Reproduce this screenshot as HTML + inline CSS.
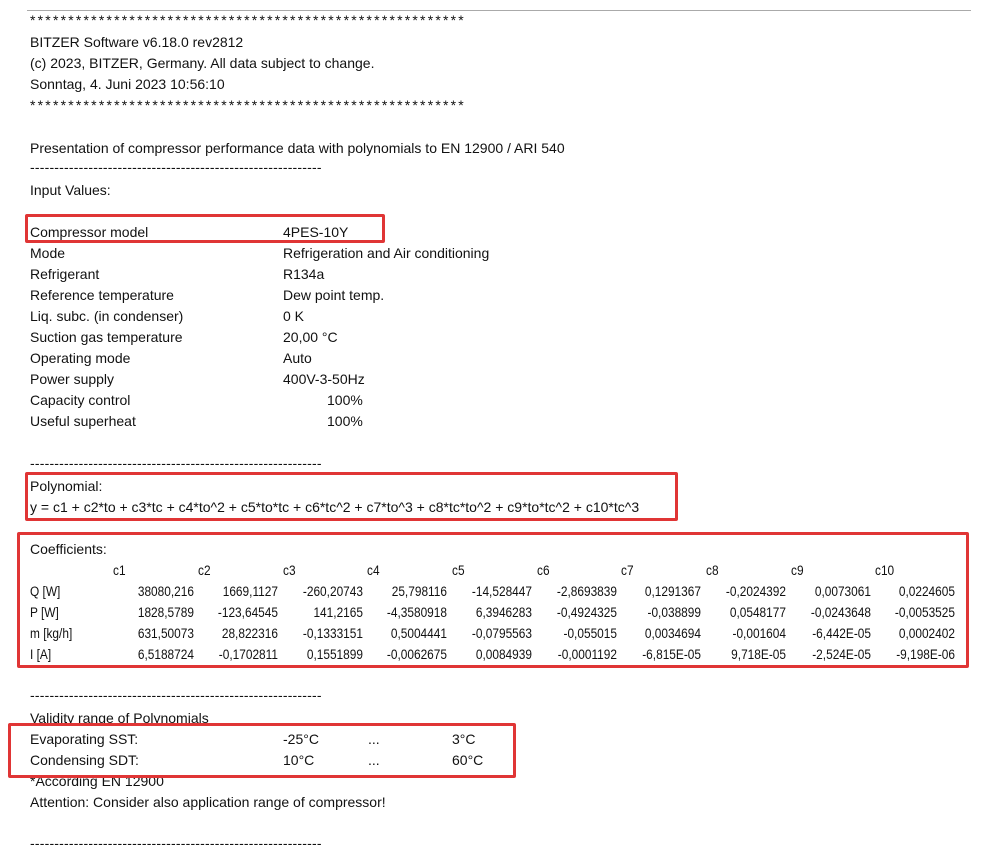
<!DOCTYPE html>
<html><head><meta charset="utf-8"><style>
body{margin:0;background:#fff;width:981px;height:867px;position:relative;overflow:hidden;font-family:"Liberation Sans",sans-serif;font-size:14px;color:#111}
.l{position:absolute;white-space:pre;line-height:16px}
.st{letter-spacing:2.2px}
.da{letter-spacing:0.2px}
.box{position:absolute;border:3px solid #e03535;border-radius:2px;box-sizing:border-box}
.r{position:absolute;left:30px;height:16px;line-height:16px;white-space:pre;font-size:13.5px}
.r span{position:absolute;top:0;transform:scaleX(0.88);transform-origin:right top;text-align:right;width:90px}
.r span.h{transform-origin:left top;text-align:left}
</style></head><body>
<div style="position:absolute;left:27px;top:10px;width:944px;height:1px;background:#aaa"></div>
<div class="l st" style="left:30px;top:12px">*********************************************************</div>
<div class="l" style="left:30px;top:34px">BITZER Software v6.18.0 rev2812</div>
<div class="l" style="left:30px;top:55px">(c) 2023, BITZER, Germany. All data subject to change.</div>
<div class="l" style="left:30px;top:76px">Sonntag, 4. Juni 2023 10:56:10</div>
<div class="l st" style="left:30px;top:97px">*********************************************************</div>
<div class="l" style="left:30px;top:140px">Presentation of compressor performance data with polynomials to EN 12900 / ARI 540</div>
<div class="l da" style="left:30px;top:159px">------------------------------------------------------------</div>
<div class="l" style="left:30px;top:182px">Input Values:</div>
<div class="l" style="left:30px;top:224px">Compressor model</div><div class="l" style="left:283px;top:224px">4PES-10Y</div>
<div class="l" style="left:30px;top:245px">Mode</div><div class="l" style="left:283px;top:245px">Refrigeration and Air conditioning</div>
<div class="l" style="left:30px;top:266px">Refrigerant</div><div class="l" style="left:283px;top:266px">R134a</div>
<div class="l" style="left:30px;top:287px">Reference temperature</div><div class="l" style="left:283px;top:287px">Dew point temp.</div>
<div class="l" style="left:30px;top:308px">Liq. subc. (in condenser)</div><div class="l" style="left:283px;top:308px">0 K</div>
<div class="l" style="left:30px;top:329px">Suction gas temperature</div><div class="l" style="left:283px;top:329px">20,00 °C</div>
<div class="l" style="left:30px;top:350px">Operating mode</div><div class="l" style="left:283px;top:350px">Auto</div>
<div class="l" style="left:30px;top:371px">Power supply</div><div class="l" style="left:283px;top:371px">400V-3-50Hz</div>
<div class="l" style="left:30px;top:392px">Capacity control</div><div class="l" style="left:327px;top:392px">100%</div>
<div class="l" style="left:30px;top:413px">Useful superheat</div><div class="l" style="left:327px;top:413px">100%</div>
<div class="l da" style="left:30px;top:455px">------------------------------------------------------------</div>
<div class="l" style="left:30px;top:478px">Polynomial:</div>
<div class="l" style="left:30px;top:499px">y = c1 + c2*to + c3*tc + c4*to^2 + c5*to*tc + c6*tc^2 + c7*to^3 + c8*tc*to^2 + c9*to*tc^2 + c10*tc^3</div>
<div class="l" style="left:30px;top:541px">Coefficients:</div>
<div class="r" style="top:563px"><span class="h" style="left:83px">c1</span><span class="h" style="left:168px">c2</span><span class="h" style="left:253px">c3</span><span class="h" style="left:337px">c4</span><span class="h" style="left:422px">c5</span><span class="h" style="left:507px">c6</span><span class="h" style="left:591px">c7</span><span class="h" style="left:676px">c8</span><span class="h" style="left:761px">c9</span><span class="h" style="left:845px">c10</span></div>
<div class="r" style="top:584px"><span class="h" style="left:0">Q [W]</span><span style="left:74px">38080,216</span><span style="left:158px">1669,1127</span><span style="left:243px">-260,20743</span><span style="left:327px">25,798116</span><span style="left:412px">-14,528447</span><span style="left:497px">-2,8693839</span><span style="left:581px">0,1291367</span><span style="left:666px">-0,2024392</span><span style="left:751px">0,0073061</span><span style="left:835px">0,0224605</span></div>
<div class="r" style="top:605px"><span class="h" style="left:0">P [W]</span><span style="left:74px">1828,5789</span><span style="left:158px">-123,64545</span><span style="left:243px">141,2165</span><span style="left:327px">-4,3580918</span><span style="left:412px">6,3946283</span><span style="left:497px">-0,4924325</span><span style="left:581px">-0,038899</span><span style="left:666px">0,0548177</span><span style="left:751px">-0,0243648</span><span style="left:835px">-0,0053525</span></div>
<div class="r" style="top:626px"><span class="h" style="left:0">m [kg/h]</span><span style="left:74px">631,50073</span><span style="left:158px">28,822316</span><span style="left:243px">-0,1333151</span><span style="left:327px">0,5004441</span><span style="left:412px">-0,0795563</span><span style="left:497px">-0,055015</span><span style="left:581px">0,0034694</span><span style="left:666px">-0,001604</span><span style="left:751px">-6,442E-05</span><span style="left:835px">0,0002402</span></div>
<div class="r" style="top:647px"><span class="h" style="left:0">I [A]</span><span style="left:74px">6,5188724</span><span style="left:158px">-0,1702811</span><span style="left:243px">0,1551899</span><span style="left:327px">-0,0062675</span><span style="left:412px">0,0084939</span><span style="left:497px">-0,0001192</span><span style="left:581px">-6,815E-05</span><span style="left:666px">9,718E-05</span><span style="left:751px">-2,524E-05</span><span style="left:835px">-9,198E-06</span></div>
<div class="l da" style="left:30px;top:687px">------------------------------------------------------------</div>
<div class="l" style="left:30px;top:710px">Validity range of Polynomials</div>
<div class="l" style="left:30px;top:731px">Evaporating SST:</div><div class="l" style="left:283px;top:731px">-25°C</div><div class="l" style="left:368px;top:731px">...</div><div class="l" style="left:452px;top:731px">3°C</div>
<div class="l" style="left:30px;top:752px">Condensing SDT:</div><div class="l" style="left:283px;top:752px">10°C</div><div class="l" style="left:368px;top:752px">...</div><div class="l" style="left:452px;top:752px">60°C</div>
<div class="l" style="left:30px;top:773px">*According EN 12900</div>
<div class="l" style="left:30px;top:794px">Attention: Consider also application range of compressor!</div>
<div class="l da" style="left:30px;top:835px">------------------------------------------------------------</div>
<div class="box" style="left:25px;top:214px;width:360px;height:29px"></div>
<div class="box" style="left:25px;top:472px;width:653px;height:49px"></div>
<div class="box" style="left:17px;top:532px;width:952px;height:136px"></div>
<div class="box" style="left:8px;top:723px;width:508px;height:55px"></div>
</body></html>
